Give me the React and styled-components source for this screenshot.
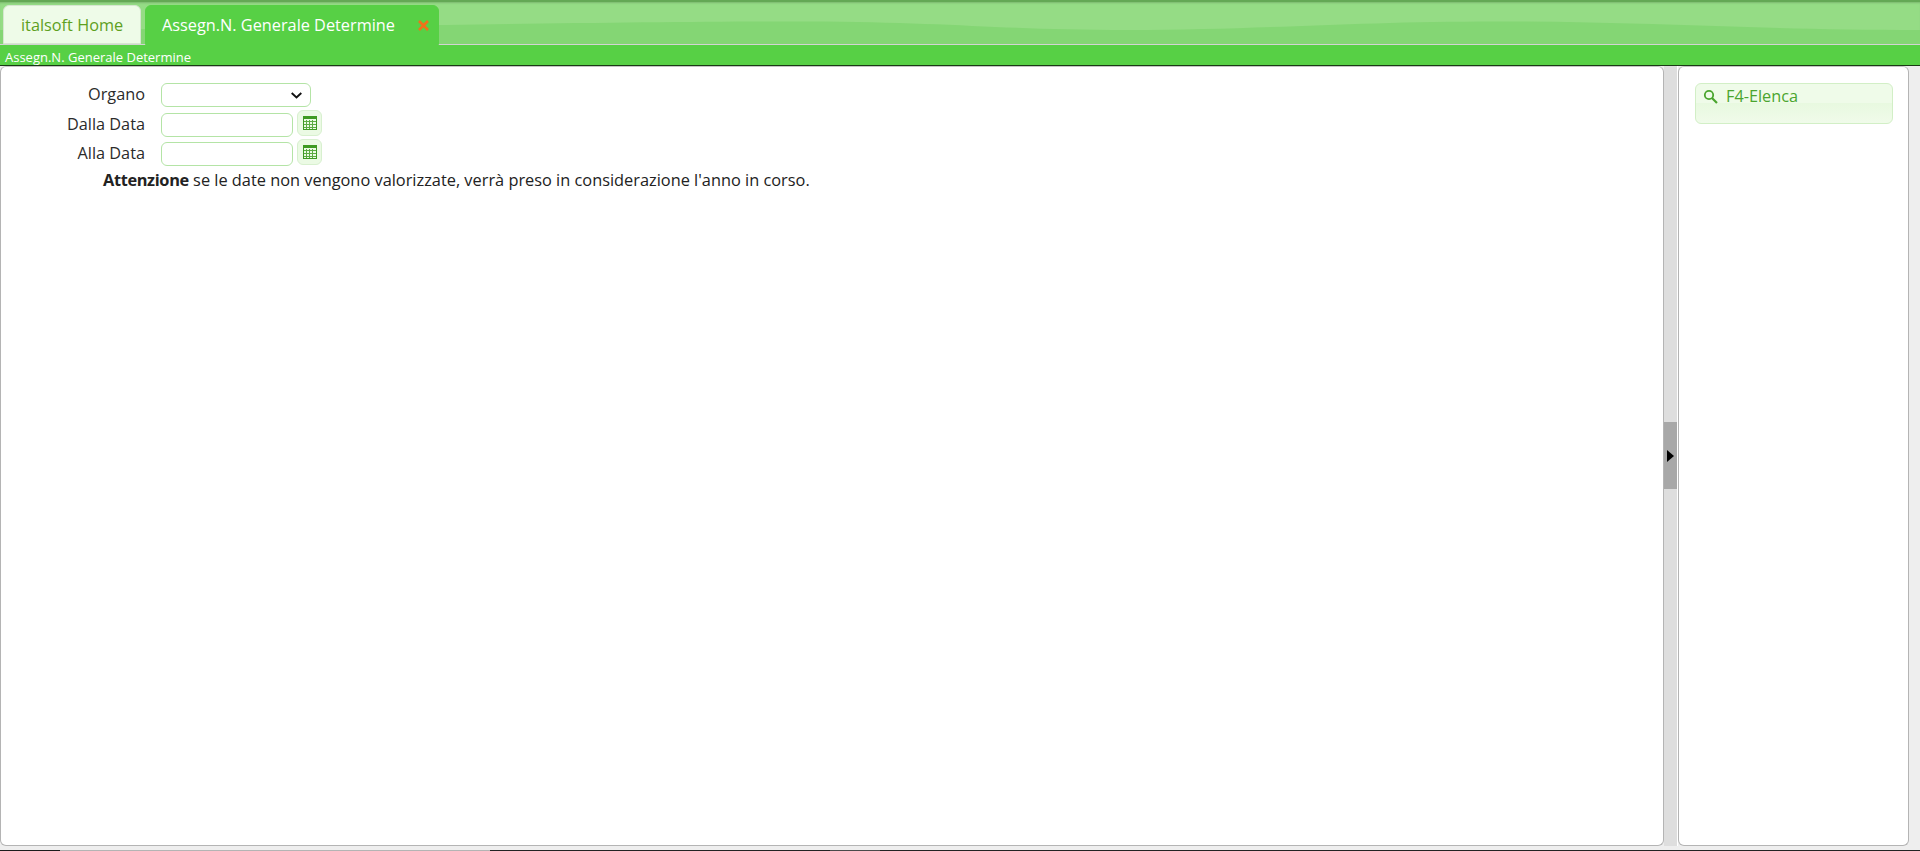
import React from 'react';
import styled, { createGlobalStyle } from 'styled-components';

const GlobalStyle = createGlobalStyle`
  html, body {
    margin: 0;
    padding: 0;
    height: 100%;
    overflow: hidden;
    background: #eeeeee;
  }
  #root {
    height: 100%;
  }
  * {
    box-sizing: border-box;
  }
`;

const Page = styled.div`
  display: flex;
  flex-direction: column;
  width: 1920px;
  height: 851px;
  font-family: "Open Sans", "Noto Sans", sans-serif;
  color: #222222;
  overflow: hidden;
`;

const TabBar = styled.div`
  position: relative;
  display: flex;
  align-items: flex-end;
  gap: 4px;
  height: 45px;
  padding-left: 3px;
  background: #95dc85;
  border-top: 2px solid #64a855;
  border-bottom: 1px solid #d3d3d3;
  box-shadow: inset 0 2px 2px -1px #7cb86e;
`;

const Waves = styled.svg`
  position: absolute;
  left: 0;
  top: 0;
  width: 100%;
  height: 42px;
`;

const Tab = styled.div`
  position: relative;
  display: flex;
  align-items: center;
  height: ${(p) => (p.$active ? '40px' : '39px')};
  width: ${(p) => p.$width}px;
  margin-bottom: ${(p) => (p.$active ? '-1px' : '0')};
  padding-left: ${(p) => (p.$active ? '16px' : '17px')};
  font-size: 16.3px;
  border-radius: 6px 6px 0 0;
  color: ${(p) => (p.$active ? '#ffffff' : '#5ea01e')};
  background: ${(p) => (p.$active ? '#57d045' : '#eefbe8')};
  border: 1px solid ${(p) => (p.$active ? '#57d045' : '#d6e6d0')};
`;

const CloseMark = styled.span`
  position: absolute;
  right: 9px;
  top: 14px;
  display: flex;
`;

const TitleBar = styled.div`
  height: 21px;
  padding: 4px 0 0 5px;
  background: #57d045;
  border-bottom: 1px solid #1a3a14;
  color: #ffffff;
  font-size: 13px;
  line-height: 17px;
`;

const Workspace = styled.div`
  display: flex;
  height: 780px;
  background: #eeeeee;
`;

const Panel = styled.div`
  background: #ffffff;
  border: 1px solid #b4b4b4;
  border-top-color: #c4c4c4;
  border-radius: 6px;
`;

const MainPanel = styled(Panel)`
  width: 1664px;
  padding-top: 16px;
`;

const Splitter = styled.div`
  display: flex;
  align-items: center;
  width: 14px;
  background: #dedede;
  border-right: 1px solid #ffffff;
`;

const SplitterHandle = styled.div`
  display: flex;
  align-items: center;
  justify-content: center;
  width: 13px;
  height: 67px;
  margin-top: -1px;
  background: #a8a8a8;
`;

const SidePanel = styled(Panel)`
  width: 231px;
  padding: 16px 15px 0 16px;
`;

const FormRow = styled.div`
  display: flex;
  align-items: center;
  height: 24px;
  margin-bottom: ${(p) => p.$after}px;
`;

const Label = styled.label`
  width: 144px;
  margin-top: -2px;
  text-align: right;
  font-size: 16.3px;
  line-height: 22px;
  color: #2b2b2b;
`;

const inputBorder = '#b4e4a6';

const SelectBox = styled.div`
  display: flex;
  align-items: center;
  justify-content: flex-end;
  width: 150px;
  height: 24px;
  margin-left: 16px;
  padding-right: 8px;
  background: #ffffff;
  border: 1px solid ${inputBorder};
  border-radius: 6px;
`;

const DateInput = styled.input`
  width: 132px;
  height: 24px;
  margin-left: 16px;
  padding: 0 4px;
  background: #ffffff;
  border: 1px solid ${inputBorder};
  border-radius: 6px;
  outline: none;
`;

const CalendarButton = styled.button`
  display: flex;
  align-items: center;
  justify-content: center;
  align-self: flex-start;
  width: 25px;
  height: 26px;
  margin: -3px 0 0 4px;
  padding: 0;
  background: #ebfae4;
  border: 1px solid #d8f0cf;
  border-radius: 6px;
`;

const Notice = styled.div`
  height: 24px;
  margin-top: -2px;
  padding-left: 102px;
  font-size: 16.35px;
  line-height: 22px;
  color: #222222;
  strong {
    font-weight: 700;
    letter-spacing: -0.35px;
  }
`;

const ActionButton = styled.button`
  display: flex;
  align-items: flex-start;
  gap: 8px;
  width: 198px;
  height: 41px;
  padding: 1px 0 0 7px;
  font-family: inherit;
  font-size: 16.3px;
  line-height: 22px;
  color: #4aa52e;
  background: linear-gradient(#effbe9 0, #effbe9 48%, #e8f9e0 50%, #f0fbea 100%);
  border: 1px solid #d2efc6;
  border-radius: 6px;
`;

const ActionIcon = styled.svg`
  margin-top: 4px;
`;

const Taskbar = styled.div`
  display: flex;
  height: 5px;
  background: #eeeeee;
  align-items: flex-end;
`;

const TaskSegment = styled.div`
  height: 1px;
  width: ${(p) => p.$width}px;
  background: ${(p) => p.$color};
`;

const Calendar = () => (
  <svg width="14" height="14" viewBox="0 0 14 14">
    <rect x="0.5" y="0.5" width="13" height="13" fill="none" stroke="#3e9a22" />
    <rect x="1" y="1" width="12" height="2" fill="#3e9a22" />
    <path
      d="M1 5.5h12M1 8.5h12M1 11.5h12M3.5 4v9M6.5 4v9M9.5 4v9"
      stroke="#5cab42"
      strokeWidth="1"
      fill="none"
    />
  </svg>
);

const segments = [
  [60, '#1c1c1c'],
  [430, '#b4b4b4'],
  [340, '#222222'],
  [50, '#4a4a4a'],
  [1040, '#222222'],
];

export default function App() {
  return (
    <Page>
      <GlobalStyle />
      <TabBar>
        <Waves viewBox="0 0 1920 42" preserveAspectRatio="none">
          <path
            d="M0 28 C 200 28 600 19 808 19.5 C 950 20 1000 28 1128 28 C 1260 28 1350 19.5 1497 19.5 C 1640 19.5 1760 28 1920 28 L1920 42 L0 42 Z"
            fill="#84d674"
          />
        </Waves>
        <Tab $width={138}>italsoft Home</Tab>
        <Tab $active $width={294}>
          Assegn.N. Generale Determine
          <CloseMark>
            <svg width="11" height="11" viewBox="0 0 11 11">
              <path d="M1 1 L10 10 M10 1 L1 10" stroke="#f0701a" strokeWidth="2.6" fill="none" />
            </svg>
          </CloseMark>
        </Tab>
      </TabBar>
      <TitleBar>Assegn.N. Generale Determine</TitleBar>
      <Workspace>
        <MainPanel>
          <FormRow $after={6}>
            <Label>Organo</Label>
            <SelectBox>
              <svg width="11" height="7" viewBox="0 0 11 7">
                <path d="M0.7 1 L5.5 5.5 L10.3 1" stroke="#111111" strokeWidth="1.9" fill="none" />
              </svg>
            </SelectBox>
          </FormRow>
          <FormRow $after={5}>
            <Label>Dalla Data</Label>
            <DateInput />
            <CalendarButton>
              <Calendar />
            </CalendarButton>
          </FormRow>
          <FormRow $after={5}>
            <Label>Alla Data</Label>
            <DateInput />
            <CalendarButton>
              <Calendar />
            </CalendarButton>
          </FormRow>
          <Notice>
            <strong>Attenzione</strong> se le date non vengono valorizzate, verrà preso in considerazione l'anno in corso.
          </Notice>
        </MainPanel>
        <Splitter>
          <SplitterHandle>
            <svg width="7" height="12" viewBox="0 0 7 12">
              <path d="M0 0 L7 6 L0 12 Z" fill="#000000" />
            </svg>
          </SplitterHandle>
        </Splitter>
        <SidePanel>
          <ActionButton>
            <ActionIcon width="15" height="15" viewBox="0 0 15 15">
              <circle cx="6" cy="6" r="4.2" stroke="#4aa52e" strokeWidth="1.8" fill="none" />
              <path d="M9 9 L14 14" stroke="#4aa52e" strokeWidth="2.2" />
            </ActionIcon>
            F4-Elenca
          </ActionButton>
        </SidePanel>
      </Workspace>
      <Taskbar>
        {segments.map(([width, color], i) => (
          <TaskSegment key={i} $width={width} $color={color} />
        ))}
      </Taskbar>
    </Page>
  );
}
